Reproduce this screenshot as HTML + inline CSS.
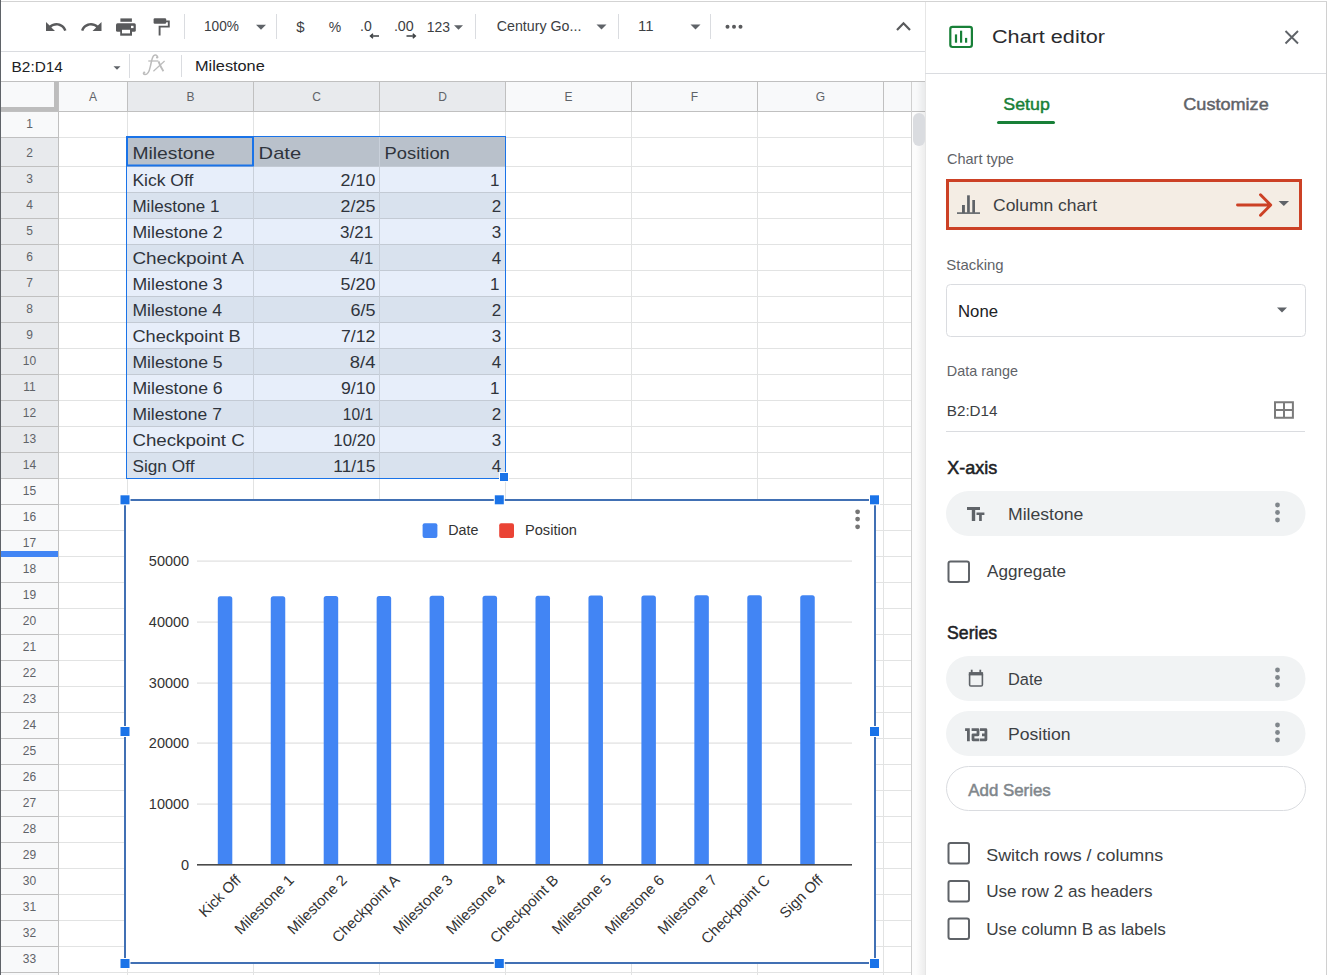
<!DOCTYPE html>
<html><head><meta charset="utf-8"><title>Chart editor</title>
<style>html,body{margin:0;padding:0;width:1327px;height:975px;overflow:hidden;background:#fff;font-family:"Liberation Sans",sans-serif} svg{display:block}</style>
</head><body><svg width="1327" height="975" viewBox="0 0 1327 975" font-family='"Liberation Sans", sans-serif'><rect x="0" y="0" width="1327" height="975" fill="#ffffff" />
<rect x="0" y="82" width="925" height="29" fill="#f8f9fa" />
<rect x="127" y="82" width="378" height="29" fill="#e8eaed" />
<rect x="0" y="111" width="58" height="864" fill="#f8f9fa" />
<rect x="0" y="137" width="58" height="341" fill="#e8eaed" />
<rect x="127" y="111" width="1" height="864" fill="#e2e3e3" />
<rect x="253" y="111" width="1" height="864" fill="#e2e3e3" />
<rect x="379" y="111" width="1" height="864" fill="#e2e3e3" />
<rect x="505" y="111" width="1" height="864" fill="#e2e3e3" />
<rect x="631" y="111" width="1" height="864" fill="#e2e3e3" />
<rect x="757" y="111" width="1" height="864" fill="#e2e3e3" />
<rect x="883" y="111" width="1" height="864" fill="#e2e3e3" />
<rect x="911" y="111" width="1" height="864" fill="#e2e3e3" />
<rect x="58" y="137" width="853" height="1" fill="#e2e3e3" />
<rect x="58" y="166" width="853" height="1" fill="#e2e3e3" />
<rect x="58" y="192" width="853" height="1" fill="#e2e3e3" />
<rect x="58" y="218" width="853" height="1" fill="#e2e3e3" />
<rect x="58" y="244" width="853" height="1" fill="#e2e3e3" />
<rect x="58" y="270" width="853" height="1" fill="#e2e3e3" />
<rect x="58" y="296" width="853" height="1" fill="#e2e3e3" />
<rect x="58" y="322" width="853" height="1" fill="#e2e3e3" />
<rect x="58" y="348" width="853" height="1" fill="#e2e3e3" />
<rect x="58" y="374" width="853" height="1" fill="#e2e3e3" />
<rect x="58" y="400" width="853" height="1" fill="#e2e3e3" />
<rect x="58" y="426" width="853" height="1" fill="#e2e3e3" />
<rect x="58" y="452" width="853" height="1" fill="#e2e3e3" />
<rect x="58" y="478" width="853" height="1" fill="#e2e3e3" />
<rect x="58" y="504" width="853" height="1" fill="#e2e3e3" />
<rect x="58" y="530" width="853" height="1" fill="#e2e3e3" />
<rect x="58" y="556" width="853" height="1" fill="#e2e3e3" />
<rect x="58" y="582" width="853" height="1" fill="#e2e3e3" />
<rect x="58" y="608" width="853" height="1" fill="#e2e3e3" />
<rect x="58" y="634" width="853" height="1" fill="#e2e3e3" />
<rect x="58" y="660" width="853" height="1" fill="#e2e3e3" />
<rect x="58" y="686" width="853" height="1" fill="#e2e3e3" />
<rect x="58" y="712" width="853" height="1" fill="#e2e3e3" />
<rect x="58" y="738" width="853" height="1" fill="#e2e3e3" />
<rect x="58" y="764" width="853" height="1" fill="#e2e3e3" />
<rect x="58" y="790" width="853" height="1" fill="#e2e3e3" />
<rect x="58" y="816" width="853" height="1" fill="#e2e3e3" />
<rect x="58" y="842" width="853" height="1" fill="#e2e3e3" />
<rect x="58" y="868" width="853" height="1" fill="#e2e3e3" />
<rect x="58" y="894" width="853" height="1" fill="#e2e3e3" />
<rect x="58" y="920" width="853" height="1" fill="#e2e3e3" />
<rect x="58" y="946" width="853" height="1" fill="#e2e3e3" />
<rect x="58" y="972" width="853" height="1" fill="#e2e3e3" />
<rect x="127" y="82" width="1" height="29" fill="#c0c0c0" />
<rect x="253" y="82" width="1" height="29" fill="#c0c0c0" />
<rect x="379" y="82" width="1" height="29" fill="#c0c0c0" />
<rect x="505" y="82" width="1" height="29" fill="#c0c0c0" />
<rect x="631" y="82" width="1" height="29" fill="#c0c0c0" />
<rect x="757" y="82" width="1" height="29" fill="#c0c0c0" />
<rect x="883" y="82" width="1" height="29" fill="#c0c0c0" />
<rect x="911" y="82" width="1" height="29" fill="#c0c0c0" />
<rect x="0" y="81" width="925" height="1" fill="#c0c0c0" />
<rect x="0" y="111" width="925" height="1" fill="#c0c0c0" />
<rect x="58" y="82" width="1" height="893" fill="#c0c0c0" />
<rect x="0" y="137" width="58" height="1" fill="#c0c0c0" />
<rect x="0" y="166" width="58" height="1" fill="#c0c0c0" />
<rect x="0" y="192" width="58" height="1" fill="#c0c0c0" />
<rect x="0" y="218" width="58" height="1" fill="#c0c0c0" />
<rect x="0" y="244" width="58" height="1" fill="#c0c0c0" />
<rect x="0" y="270" width="58" height="1" fill="#c0c0c0" />
<rect x="0" y="296" width="58" height="1" fill="#c0c0c0" />
<rect x="0" y="322" width="58" height="1" fill="#c0c0c0" />
<rect x="0" y="348" width="58" height="1" fill="#c0c0c0" />
<rect x="0" y="374" width="58" height="1" fill="#c0c0c0" />
<rect x="0" y="400" width="58" height="1" fill="#c0c0c0" />
<rect x="0" y="426" width="58" height="1" fill="#c0c0c0" />
<rect x="0" y="452" width="58" height="1" fill="#c0c0c0" />
<rect x="0" y="478" width="58" height="1" fill="#c0c0c0" />
<rect x="0" y="504" width="58" height="1" fill="#c0c0c0" />
<rect x="0" y="530" width="58" height="1" fill="#c0c0c0" />
<rect x="0" y="556" width="58" height="1" fill="#c0c0c0" />
<rect x="0" y="582" width="58" height="1" fill="#c0c0c0" />
<rect x="0" y="608" width="58" height="1" fill="#c0c0c0" />
<rect x="0" y="634" width="58" height="1" fill="#c0c0c0" />
<rect x="0" y="660" width="58" height="1" fill="#c0c0c0" />
<rect x="0" y="686" width="58" height="1" fill="#c0c0c0" />
<rect x="0" y="712" width="58" height="1" fill="#c0c0c0" />
<rect x="0" y="738" width="58" height="1" fill="#c0c0c0" />
<rect x="0" y="764" width="58" height="1" fill="#c0c0c0" />
<rect x="0" y="790" width="58" height="1" fill="#c0c0c0" />
<rect x="0" y="816" width="58" height="1" fill="#c0c0c0" />
<rect x="0" y="842" width="58" height="1" fill="#c0c0c0" />
<rect x="0" y="868" width="58" height="1" fill="#c0c0c0" />
<rect x="0" y="894" width="58" height="1" fill="#c0c0c0" />
<rect x="0" y="920" width="58" height="1" fill="#c0c0c0" />
<rect x="0" y="946" width="58" height="1" fill="#c0c0c0" />
<rect x="0" y="972" width="58" height="1" fill="#c0c0c0" />
<rect x="54" y="82" width="4" height="29" fill="#bdbdbd" />
<rect x="0" y="107" width="58" height="4" fill="#bdbdbd" />
<text x="93.0" y="101" font-size="12" fill="#5f6368" font-weight="normal" text-anchor="middle" >A</text>
<text x="190.5" y="101" font-size="12" fill="#5f6368" font-weight="normal" text-anchor="middle" >B</text>
<text x="316.5" y="101" font-size="12" fill="#5f6368" font-weight="normal" text-anchor="middle" >C</text>
<text x="442.5" y="101" font-size="12" fill="#5f6368" font-weight="normal" text-anchor="middle" >D</text>
<text x="568.5" y="101" font-size="12" fill="#5f6368" font-weight="normal" text-anchor="middle" >E</text>
<text x="694.5" y="101" font-size="12" fill="#5f6368" font-weight="normal" text-anchor="middle" >F</text>
<text x="820.5" y="101" font-size="12" fill="#5f6368" font-weight="normal" text-anchor="middle" >G</text>
<text x="29.5" y="128.2" font-size="12" fill="#5f6368" font-weight="normal" text-anchor="middle" >1</text>
<text x="29.5" y="157.2" font-size="12" fill="#5f6368" font-weight="normal" text-anchor="middle" >2</text>
<text x="29.5" y="183.2" font-size="12" fill="#5f6368" font-weight="normal" text-anchor="middle" >3</text>
<text x="29.5" y="209.2" font-size="12" fill="#5f6368" font-weight="normal" text-anchor="middle" >4</text>
<text x="29.5" y="235.2" font-size="12" fill="#5f6368" font-weight="normal" text-anchor="middle" >5</text>
<text x="29.5" y="261.2" font-size="12" fill="#5f6368" font-weight="normal" text-anchor="middle" >6</text>
<text x="29.5" y="287.2" font-size="12" fill="#5f6368" font-weight="normal" text-anchor="middle" >7</text>
<text x="29.5" y="313.2" font-size="12" fill="#5f6368" font-weight="normal" text-anchor="middle" >8</text>
<text x="29.5" y="339.2" font-size="12" fill="#5f6368" font-weight="normal" text-anchor="middle" >9</text>
<text x="29.5" y="365.2" font-size="12" fill="#5f6368" font-weight="normal" text-anchor="middle" >10</text>
<text x="29.5" y="391.2" font-size="12" fill="#5f6368" font-weight="normal" text-anchor="middle" >11</text>
<text x="29.5" y="417.2" font-size="12" fill="#5f6368" font-weight="normal" text-anchor="middle" >12</text>
<text x="29.5" y="443.2" font-size="12" fill="#5f6368" font-weight="normal" text-anchor="middle" >13</text>
<text x="29.5" y="469.2" font-size="12" fill="#5f6368" font-weight="normal" text-anchor="middle" >14</text>
<text x="29.5" y="495.2" font-size="12" fill="#5f6368" font-weight="normal" text-anchor="middle" >15</text>
<text x="29.5" y="521.2" font-size="12" fill="#5f6368" font-weight="normal" text-anchor="middle" >16</text>
<text x="29.5" y="547.2" font-size="12" fill="#5f6368" font-weight="normal" text-anchor="middle" >17</text>
<text x="29.5" y="573.2" font-size="12" fill="#5f6368" font-weight="normal" text-anchor="middle" >18</text>
<text x="29.5" y="599.2" font-size="12" fill="#5f6368" font-weight="normal" text-anchor="middle" >19</text>
<text x="29.5" y="625.2" font-size="12" fill="#5f6368" font-weight="normal" text-anchor="middle" >20</text>
<text x="29.5" y="651.2" font-size="12" fill="#5f6368" font-weight="normal" text-anchor="middle" >21</text>
<text x="29.5" y="677.2" font-size="12" fill="#5f6368" font-weight="normal" text-anchor="middle" >22</text>
<text x="29.5" y="703.2" font-size="12" fill="#5f6368" font-weight="normal" text-anchor="middle" >23</text>
<text x="29.5" y="729.2" font-size="12" fill="#5f6368" font-weight="normal" text-anchor="middle" >24</text>
<text x="29.5" y="755.2" font-size="12" fill="#5f6368" font-weight="normal" text-anchor="middle" >25</text>
<text x="29.5" y="781.2" font-size="12" fill="#5f6368" font-weight="normal" text-anchor="middle" >26</text>
<text x="29.5" y="807.2" font-size="12" fill="#5f6368" font-weight="normal" text-anchor="middle" >27</text>
<text x="29.5" y="833.2" font-size="12" fill="#5f6368" font-weight="normal" text-anchor="middle" >28</text>
<text x="29.5" y="859.2" font-size="12" fill="#5f6368" font-weight="normal" text-anchor="middle" >29</text>
<text x="29.5" y="885.2" font-size="12" fill="#5f6368" font-weight="normal" text-anchor="middle" >30</text>
<text x="29.5" y="911.2" font-size="12" fill="#5f6368" font-weight="normal" text-anchor="middle" >31</text>
<text x="29.5" y="937.2" font-size="12" fill="#5f6368" font-weight="normal" text-anchor="middle" >32</text>
<text x="29.5" y="963.2" font-size="12" fill="#5f6368" font-weight="normal" text-anchor="middle" >33</text>
<rect x="0" y="551" width="58" height="6" fill="#4285f4" />
<rect x="912" y="112" width="13" height="863" fill="#fcfcfc" />
<defs><linearGradient id="sh" x1="0" x2="1" y1="0" y2="0"><stop offset="0" stop-color="#000" stop-opacity="0"/><stop offset="1" stop-color="#000" stop-opacity="0.06"/></linearGradient></defs>
<rect x="916" y="82" width="9" height="893" fill="url(#sh)" />
<rect x="911" y="82" width="1" height="893" fill="#d0d0d0" />
<rect x="913" y="113" width="12" height="33" rx="6" fill="#dadce0"/>
<rect x="127" y="137" width="378" height="29" fill="#b9c1cb" />
<rect x="127" y="166" width="378" height="26" fill="#e7eefa" />
<rect x="127" y="192" width="378" height="26" fill="#d9e2ee" />
<rect x="127" y="218" width="378" height="26" fill="#e7eefa" />
<rect x="127" y="244" width="378" height="26" fill="#d9e2ee" />
<rect x="127" y="270" width="378" height="26" fill="#e7eefa" />
<rect x="127" y="296" width="378" height="26" fill="#d9e2ee" />
<rect x="127" y="322" width="378" height="26" fill="#e7eefa" />
<rect x="127" y="348" width="378" height="26" fill="#d9e2ee" />
<rect x="127" y="374" width="378" height="26" fill="#e7eefa" />
<rect x="127" y="400" width="378" height="26" fill="#d9e2ee" />
<rect x="127" y="426" width="378" height="26" fill="#e7eefa" />
<rect x="127" y="452" width="378" height="26" fill="#d9e2ee" />
<rect x="127" y="166" width="378" height="1" fill="#c3cad4" />
<rect x="127" y="192" width="378" height="1" fill="#c3cad4" />
<rect x="127" y="218" width="378" height="1" fill="#c3cad4" />
<rect x="127" y="244" width="378" height="1" fill="#c3cad4" />
<rect x="127" y="270" width="378" height="1" fill="#c3cad4" />
<rect x="127" y="296" width="378" height="1" fill="#c3cad4" />
<rect x="127" y="322" width="378" height="1" fill="#c3cad4" />
<rect x="127" y="348" width="378" height="1" fill="#c3cad4" />
<rect x="127" y="374" width="378" height="1" fill="#c3cad4" />
<rect x="127" y="400" width="378" height="1" fill="#c3cad4" />
<rect x="127" y="426" width="378" height="1" fill="#c3cad4" />
<rect x="127" y="452" width="378" height="1" fill="#c3cad4" />
<rect x="253" y="137" width="1" height="341" fill="#c9d0da" />
<rect x="379" y="137" width="1" height="341" fill="#c9d0da" />
<rect x="126" y="136" width="380" height="1" fill="#1a73e8" />
<rect x="126" y="478" width="380" height="1" fill="#1a73e8" />
<rect x="126" y="136" width="1" height="343" fill="#1a73e8" />
<rect x="505" y="136" width="1" height="343" fill="#1a73e8" />
<rect x="127" y="137" width="126" height="28.5" fill="none" stroke="#1a73e8" stroke-width="2"/>
<rect x="499" y="472" width="10" height="10" fill="#ffffff" />
<rect x="500" y="473" width="8" height="8" fill="#1a73e8" />
<text transform="translate(132.40 158.8) scale(1.1352 1)" font-size="17" fill="#2f343c" font-weight="normal" text-anchor="start" >Milestone</text>
<text transform="translate(258.60 158.8) scale(1.1862 1)" font-size="17" fill="#2f343c" font-weight="normal" text-anchor="start" >Date</text>
<text transform="translate(384.50 158.8) scale(1.0814 1)" font-size="17" fill="#2f343c" font-weight="normal" text-anchor="start" >Position</text>
<text transform="translate(132.40 186) scale(1.0313 1)" font-size="17" fill="#2f343c" font-weight="normal" text-anchor="start" >Kick Off</text>
<text transform="translate(375.38 186) scale(1.0511 1)" font-size="17" fill="#2f343c" font-weight="normal" text-anchor="end" >2/10</text>
<text transform="translate(499.52 186) scale(1.0000 1)" font-size="17" fill="#2f343c" font-weight="normal" text-anchor="end" >1</text>
<text transform="translate(132.40 212) scale(1.0028 1)" font-size="17" fill="#2f343c" font-weight="normal" text-anchor="start" >Milestone 1</text>
<text transform="translate(375.38 212) scale(1.0511 1)" font-size="17" fill="#2f343c" font-weight="normal" text-anchor="end" >2/25</text>
<text transform="translate(501.22 212) scale(1.0000 1)" font-size="17" fill="#2f343c" font-weight="normal" text-anchor="end" >2</text>
<text transform="translate(132.40 238) scale(1.0385 1)" font-size="17" fill="#2f343c" font-weight="normal" text-anchor="start" >Milestone 2</text>
<text transform="translate(373.18 238) scale(0.9998 1)" font-size="17" fill="#2f343c" font-weight="normal" text-anchor="end" >3/21</text>
<text transform="translate(501.22 238) scale(1.0000 1)" font-size="17" fill="#2f343c" font-weight="normal" text-anchor="end" >3</text>
<text transform="translate(132.40 264) scale(1.1121 1)" font-size="17" fill="#2f343c" font-weight="normal" text-anchor="start" >Checkpoint A</text>
<text transform="translate(373.20 264) scale(0.9818 1)" font-size="17" fill="#2f343c" font-weight="normal" text-anchor="end" >4/1</text>
<text transform="translate(501.22 264) scale(1.0000 1)" font-size="17" fill="#2f343c" font-weight="normal" text-anchor="end" >4</text>
<text transform="translate(132.40 290) scale(1.0385 1)" font-size="17" fill="#2f343c" font-weight="normal" text-anchor="start" >Milestone 3</text>
<text transform="translate(375.38 290) scale(1.0511 1)" font-size="17" fill="#2f343c" font-weight="normal" text-anchor="end" >5/20</text>
<text transform="translate(499.52 290) scale(1.0000 1)" font-size="17" fill="#2f343c" font-weight="normal" text-anchor="end" >1</text>
<text transform="translate(132.40 316) scale(1.0327 1)" font-size="17" fill="#2f343c" font-weight="normal" text-anchor="start" >Milestone 4</text>
<text transform="translate(375.40 316) scale(1.0580 1)" font-size="17" fill="#2f343c" font-weight="normal" text-anchor="end" >6/5</text>
<text transform="translate(501.22 316) scale(1.0000 1)" font-size="17" fill="#2f343c" font-weight="normal" text-anchor="end" >2</text>
<text transform="translate(132.40 342) scale(1.0711 1)" font-size="17" fill="#2f343c" font-weight="normal" text-anchor="start" >Checkpoint B</text>
<text transform="translate(375.38 342) scale(1.0421 1)" font-size="17" fill="#2f343c" font-weight="normal" text-anchor="end" >7/12</text>
<text transform="translate(501.22 342) scale(1.0000 1)" font-size="17" fill="#2f343c" font-weight="normal" text-anchor="end" >3</text>
<text transform="translate(132.40 368) scale(1.0385 1)" font-size="17" fill="#2f343c" font-weight="normal" text-anchor="start" >Milestone 5</text>
<text transform="translate(375.40 368) scale(1.0834 1)" font-size="17" fill="#2f343c" font-weight="normal" text-anchor="end" >8/4</text>
<text transform="translate(501.22 368) scale(1.0000 1)" font-size="17" fill="#2f343c" font-weight="normal" text-anchor="end" >4</text>
<text transform="translate(132.40 394) scale(1.0385 1)" font-size="17" fill="#2f343c" font-weight="normal" text-anchor="start" >Milestone 6</text>
<text transform="translate(375.38 394) scale(1.0421 1)" font-size="17" fill="#2f343c" font-weight="normal" text-anchor="end" >9/10</text>
<text transform="translate(499.52 394) scale(1.0000 1)" font-size="17" fill="#2f343c" font-weight="normal" text-anchor="end" >1</text>
<text transform="translate(132.40 420) scale(1.0293 1)" font-size="17" fill="#2f343c" font-weight="normal" text-anchor="start" >Milestone 7</text>
<text transform="translate(373.18 420) scale(0.9182 1)" font-size="17" fill="#2f343c" font-weight="normal" text-anchor="end" >10/1</text>
<text transform="translate(501.22 420) scale(1.0000 1)" font-size="17" fill="#2f343c" font-weight="normal" text-anchor="end" >2</text>
<text transform="translate(132.40 446) scale(1.1015 1)" font-size="17" fill="#2f343c" font-weight="normal" text-anchor="start" >Checkpoint C</text>
<text transform="translate(375.40 446) scale(0.9896 1)" font-size="17" fill="#2f343c" font-weight="normal" text-anchor="end" >10/20</text>
<text transform="translate(501.22 446) scale(1.0000 1)" font-size="17" fill="#2f343c" font-weight="normal" text-anchor="end" >3</text>
<text transform="translate(132.40 472) scale(1.0154 1)" font-size="17" fill="#2f343c" font-weight="normal" text-anchor="start" >Sign Off</text>
<text transform="translate(375.41 472) scale(1.0202 1)" font-size="17" fill="#2f343c" font-weight="normal" text-anchor="end" >11/15</text>
<text transform="translate(501.22 472) scale(1.0000 1)" font-size="17" fill="#2f343c" font-weight="normal" text-anchor="end" >4</text>
<rect x="125" y="500" width="750" height="463" fill="#ffffff" />
<rect x="197" y="560.5" width="655" height="1.2" fill="#e0e0e0" />
<rect x="197" y="621.5" width="655" height="1.2" fill="#e0e0e0" />
<rect x="197" y="682.5" width="655" height="1.2" fill="#e0e0e0" />
<rect x="197" y="742.5" width="655" height="1.2" fill="#e0e0e0" />
<rect x="197" y="803.5" width="655" height="1.2" fill="#e0e0e0" />
<text x="189.2" y="566" font-size="14.5" fill="#333333" font-weight="normal" text-anchor="end" >50000</text>
<text x="189.2" y="626.8" font-size="14.5" fill="#333333" font-weight="normal" text-anchor="end" >40000</text>
<text x="189.2" y="687.6" font-size="14.5" fill="#333333" font-weight="normal" text-anchor="end" >30000</text>
<text x="189.2" y="748.4" font-size="14.5" fill="#333333" font-weight="normal" text-anchor="end" >20000</text>
<text x="189.2" y="809.2" font-size="14.5" fill="#333333" font-weight="normal" text-anchor="end" >10000</text>
<text x="189.2" y="870" font-size="14.5" fill="#333333" font-weight="normal" text-anchor="end" >0</text>
<path d="M217.80,865 V598.70 Q217.80,596.20 220.30,596.20 H229.80 Q232.30,596.20 232.30,598.70 V865 Z" fill="#4285f4"/>
<path d="M270.75,865 V598.65 Q270.75,596.15 273.25,596.15 H282.75 Q285.25,596.15 285.25,598.65 V865 Z" fill="#4285f4"/>
<path d="M323.70,865 V598.56 Q323.70,596.06 326.20,596.06 H335.70 Q338.20,596.06 338.20,598.56 V865 Z" fill="#4285f4"/>
<path d="M376.65,865 V598.52 Q376.65,596.02 379.15,596.02 H388.65 Q391.15,596.02 391.15,598.52 V865 Z" fill="#4285f4"/>
<path d="M429.60,865 V598.34 Q429.60,595.84 432.10,595.84 H441.60 Q444.10,595.84 444.10,598.34 V865 Z" fill="#4285f4"/>
<path d="M482.55,865 V598.29 Q482.55,595.79 485.05,595.79 H494.55 Q497.05,595.79 497.05,598.29 V865 Z" fill="#4285f4"/>
<path d="M535.50,865 V598.15 Q535.50,595.65 538.00,595.65 H547.50 Q550.00,595.65 550.00,598.15 V865 Z" fill="#4285f4"/>
<path d="M588.45,865 V598.07 Q588.45,595.57 590.95,595.57 H600.45 Q602.95,595.57 602.95,598.07 V865 Z" fill="#4285f4"/>
<path d="M641.40,865 V597.94 Q641.40,595.44 643.90,595.44 H653.40 Q655.90,595.44 655.90,597.94 V865 Z" fill="#4285f4"/>
<path d="M694.35,865 V597.86 Q694.35,595.36 696.85,595.36 H706.35 Q708.85,595.36 708.85,597.86 V865 Z" fill="#4285f4"/>
<path d="M747.30,865 V597.79 Q747.30,595.29 749.80,595.29 H759.30 Q761.80,595.29 761.80,597.79 V865 Z" fill="#4285f4"/>
<path d="M800.25,865 V597.70 Q800.25,595.20 802.75,595.20 H812.25 Q814.75,595.20 814.75,597.70 V865 Z" fill="#4285f4"/>
<rect x="197" y="864" width="655" height="1.6" fill="#4a4a4a" />
<rect x="422.6" y="523.3" width="14.8" height="14.6" rx="2" fill="#4285f4"/>
<text transform="translate(448.20 534.6) scale(0.9859 1)" font-size="14.5" fill="#333333" font-weight="normal" text-anchor="start" >Date</text>
<rect x="499.2" y="523.3" width="14.8" height="14.6" rx="2" fill="#ea4335"/>
<text transform="translate(525.00 534.6) scale(1.0081 1)" font-size="14.5" fill="#333333" font-weight="normal" text-anchor="start" >Position</text>
<text x="242.00" y="881" font-size="15" fill="#333333" text-anchor="end" transform="rotate(-45 242.00 881)">Kick Off</text>
<text x="294.90" y="881" font-size="15" fill="#333333" text-anchor="end" transform="rotate(-45 294.90 881)">Milestone 1</text>
<text x="347.80" y="881" font-size="15" fill="#333333" text-anchor="end" transform="rotate(-45 347.80 881)">Milestone 2</text>
<text x="400.70" y="881" font-size="15" fill="#333333" text-anchor="end" transform="rotate(-45 400.70 881)">Checkpoint A</text>
<text x="453.60" y="881" font-size="15" fill="#333333" text-anchor="end" transform="rotate(-45 453.60 881)">Milestone 3</text>
<text x="506.50" y="881" font-size="15" fill="#333333" text-anchor="end" transform="rotate(-45 506.50 881)">Milestone 4</text>
<text x="559.40" y="881" font-size="15" fill="#333333" text-anchor="end" transform="rotate(-45 559.40 881)">Checkpoint B</text>
<text x="612.30" y="881" font-size="15" fill="#333333" text-anchor="end" transform="rotate(-45 612.30 881)">Milestone 5</text>
<text x="665.20" y="881" font-size="15" fill="#333333" text-anchor="end" transform="rotate(-45 665.20 881)">Milestone 6</text>
<text x="718.10" y="881" font-size="15" fill="#333333" text-anchor="end" transform="rotate(-45 718.10 881)">Milestone 7</text>
<text x="771.00" y="881" font-size="15" fill="#333333" text-anchor="end" transform="rotate(-45 771.00 881)">Checkpoint C</text>
<text x="823.90" y="881" font-size="15" fill="#333333" text-anchor="end" transform="rotate(-45 823.90 881)">Sign Off</text>
<circle cx="857.6" cy="511.8" r="2.4" fill="#757575"/>
<circle cx="857.6" cy="519.1" r="2.4" fill="#757575"/>
<circle cx="857.6" cy="526.8" r="2.4" fill="#757575"/>
<rect x="124" y="499" width="752" height="2" fill="#4170b4" />
<rect x="124" y="962" width="752" height="2" fill="#4170b4" />
<rect x="124" y="499" width="2" height="465" fill="#4170b4" />
<rect x="874" y="499" width="2" height="465" fill="#4170b4" />
<rect x="119.5" y="494.3" width="11" height="11" fill="#ffffff" />
<rect x="120.5" y="495.3" width="9" height="9" fill="#1a73e8" />
<rect x="119.5" y="958" width="11" height="11" fill="#ffffff" />
<rect x="120.5" y="959" width="9" height="9" fill="#1a73e8" />
<rect x="493.8" y="494.3" width="11" height="11" fill="#ffffff" />
<rect x="494.8" y="495.3" width="9" height="9" fill="#1a73e8" />
<rect x="493.8" y="958" width="11" height="11" fill="#ffffff" />
<rect x="494.8" y="959" width="9" height="9" fill="#1a73e8" />
<rect x="869" y="494.3" width="11" height="11" fill="#ffffff" />
<rect x="870" y="495.3" width="9" height="9" fill="#1a73e8" />
<rect x="869" y="958" width="11" height="11" fill="#ffffff" />
<rect x="870" y="959" width="9" height="9" fill="#1a73e8" />
<rect x="119.5" y="726" width="11" height="11" fill="#ffffff" />
<rect x="120.5" y="727" width="9" height="9" fill="#1a73e8" />
<rect x="869" y="726" width="11" height="11" fill="#ffffff" />
<rect x="870" y="727" width="9" height="9" fill="#1a73e8" />
<rect x="0" y="0" width="1327" height="81" fill="#ffffff" />
<rect x="0" y="1" width="1327" height="1" fill="#d3d3d3" />
<rect x="0" y="51" width="925" height="1" fill="#dadce0" />
<rect x="0" y="81" width="925" height="1" fill="#c0c0c0" />
<path transform="translate(44 15)" fill="#595a5c" d="M12.5 8c-2.65 0-5.05.99-6.9 2.6L2 7v9h9l-3.62-3.62c1.39-1.16 3.16-1.88 5.12-1.88 3.54 0 6.55 2.31 7.6 5.5l2.37-.78C21.08 11.03 17.15 8 12.5 8z"/>
<path transform="translate(79.5 15)" fill="#595a5c" d="M18.4 10.6C16.55 8.99 14.15 8 11.5 8c-4.65 0-8.58 3.03-9.96 7.22L3.9 16c1.05-3.19 4.05-5.5 7.6-5.5 1.95 0 3.73.72 5.12 1.88L13 16h9V7l-3.6 3.6z"/>
<rect x="120.4" y="18.4" width="11.5" height="3.4" fill="#595a5c"/>
<rect x="116" y="23.2" width="19.8" height="8.6" rx="1.5" fill="#595a5c"/>
<rect x="120.2" y="28.6" width="11.8" height="7.1" fill="#595a5c"/>
<rect x="122" y="29.8" width="8" height="3.6" fill="#ffffff"/>
<rect x="131" y="25.8" width="2.5" height="2.3" fill="#ffffff"/>
<rect x="153.6" y="18.2" width="12.6" height="5.6" rx="1.2" fill="#595a5c"/>
<path fill="none" stroke="#595a5c" stroke-width="1.9" d="M166 21.4 H168.8 V26.6 H159.6 V35.4"/>
<rect x="184.0" y="14" width="1" height="25" fill="#dadce0" />
<rect x="276.0" y="14" width="1" height="25" fill="#dadce0" />
<rect x="475.0" y="14" width="1" height="25" fill="#dadce0" />
<rect x="618.0" y="14" width="1" height="25" fill="#dadce0" />
<rect x="710.0" y="14" width="1" height="25" fill="#dadce0" />
<text transform="translate(204.00 31) scale(0.9775 1)" font-size="14" fill="#3c4043" font-weight="normal" text-anchor="start" >100%</text>
<path d="M256.0,24.7 L266.0,24.7 L261,29.7 Z" fill="#5f6368"/>
<text x="300.3" y="32" font-size="15" fill="#3c4043" font-weight="normal" text-anchor="middle" >$</text>
<text x="335" y="31.5" font-size="14" fill="#3c4043" font-weight="normal" text-anchor="middle" >%</text>
<text transform="translate(360.00 30.9) scale(1.0009 1)" font-size="14" fill="#3c4043" font-weight="normal" text-anchor="start" >.0</text>
<path d="M379 36 H371 M373 33.8 L370.5 36 L373 38.2" stroke="#3c4043" stroke-width="1.5" fill="none"/>
<text transform="translate(393.90 30.9) scale(1.0226 1)" font-size="14" fill="#3c4043" font-weight="normal" text-anchor="start" >.00</text>
<path d="M406.5 36 H415 M412.8 33.8 L415.3 36 L412.8 38.2" stroke="#3c4043" stroke-width="1.5" fill="none"/>
<text transform="translate(426.70 31.5) scale(0.9981 1)" font-size="14" fill="#3c4043" font-weight="normal" text-anchor="start" >123</text>
<path d="M454.0,25.2 L463.0,25.2 L458.5,29.8 Z" fill="#5f6368"/>
<text transform="translate(496.70 31.2) scale(1.0184 1)" font-size="14" fill="#3c4043" font-weight="normal" text-anchor="start" >Century Go...</text>
<path d="M596.5,24.5 L606.5,24.5 L601.5,29.5 Z" fill="#5f6368"/>
<text transform="translate(638.00 31.2) scale(1.0671 1)" font-size="14" fill="#3c4043" font-weight="normal" text-anchor="start" >11</text>
<path d="M690.5,24.5 L700.5,24.5 L695.5,29.5 Z" fill="#5f6368"/>
<circle cx="727.5" cy="26.8" r="2" fill="#595a5c"/>
<circle cx="734" cy="26.8" r="2" fill="#595a5c"/>
<circle cx="740.5" cy="26.8" r="2" fill="#595a5c"/>
<path d="M897 30 L903.5 23.3 L910 30" stroke="#595a5c" stroke-width="2.2" fill="none"/>
<text transform="translate(11.60 71.6) scale(1.0255 1)" font-size="15" fill="#202124" font-weight="normal" text-anchor="start" >B2:D14</text>
<path d="M113.5,66.25 L120.5,66.25 L117,69.75 Z" fill="#5f6368"/>
<rect x="129" y="54" width="1" height="24" fill="#dadce0" />
<path d="M157.8 57.6 C157.6 54.9 155.2 54.2 153.6 55.8 C152.1 57.3 151.6 60.8 150.3 66.6 C149.3 71.3 147.6 74.6 145.1 74.6 C143.7 74.6 143.2 73.8 143.6 72.9" stroke="#bcbcbc" stroke-width="1.5" fill="none"/>
<circle cx="157.1" cy="57.4" r="1.15" fill="#bcbcbc"/><circle cx="144.2" cy="72.6" r="1.15" fill="#bcbcbc"/>
<path d="M148.3 61 H158.4" stroke="#bcbcbc" stroke-width="1.3" fill="none"/>
<path d="M153.4 71.2 L164.6 61" stroke="#bcbcbc" stroke-width="1.2" fill="none"/>
<path d="M158.5 61.4 Q160.8 67.5 163.4 71.2" stroke="#bcbcbc" stroke-width="1.9" fill="none"/>
<rect x="181" y="55" width="1" height="22" fill="#dadce0" />
<text transform="translate(195.00 70.8) scale(1.0872 1)" font-size="15" fill="#202124" font-weight="normal" text-anchor="start" >Milestone</text>
<rect x="0" y="0" width="1" height="975" fill="#5f6368" />
<rect x="925" y="2" width="402" height="973" fill="#ffffff" />
<rect x="925" y="2" width="1" height="973" fill="#e6e6e6" />
<rect x="1326" y="2" width="1" height="973" fill="#d0d0d0" />
<rect x="925" y="73" width="401" height="1" fill="#dadce0" />
<rect x="950.3" y="26.8" width="21.6" height="20.2" rx="2.2" fill="none" stroke="#188038" stroke-width="2.2"/>
<rect x="954.9" y="34.4" width="2.2" height="8.3" fill="#188038" />
<rect x="960" y="30.7" width="2.2" height="12" fill="#188038" />
<rect x="965" y="37.9" width="2.2" height="4.8" fill="#188038" />
<text transform="translate(992.00 43) scale(1.1690 1)" font-size="18.5" fill="#2a2b2e" font-weight="normal" text-anchor="start" >Chart editor</text>
<path d="M1285.5 31 L1298 43.5 M1298 31 L1285.5 43.5" stroke="#5f6368" stroke-width="1.9"/>
<text transform="translate(1003.30 109.5) scale(1.0787 1)" font-size="16.5" fill="#188038" font-weight="normal" text-anchor="start" stroke="#188038" stroke-width="0.45">Setup</text>
<text transform="translate(1183.30 109.8) scale(1.0967 1)" font-size="16.5" fill="#5f6368" font-weight="normal" text-anchor="start" stroke="#5f6368" stroke-width="0.45">Customize</text>
<rect x="997" y="121" width="58" height="3" rx="1.5" fill="#188038"/>
<text transform="translate(947.00 164) scale(1.0376 1)" font-size="14" fill="#5f6368" font-weight="normal" text-anchor="start" >Chart type</text>
<rect x="947.5" y="180.5" width="353" height="48" fill="#f4ede4" stroke="#cc4125" stroke-width="3"/>
<rect x="957" y="212.3" width="23" height="1.6" fill="#5f6368" />
<rect x="962" y="205" width="2.9" height="8" fill="#5f6368" />
<rect x="967.1" y="195.3" width="2.7" height="17.5" fill="#5f6368" />
<rect x="972.3" y="200" width="2.7" height="12.8" fill="#5f6368" />
<text transform="translate(993.00 210.8) scale(1.0598 1)" font-size="16.5" fill="#3c4043" font-weight="normal" text-anchor="start" >Column chart</text>
<path d="M1237.5 205 H1270 M1260.5 194.8 L1270.7 205 L1260.5 215.2" stroke="#cc4125" stroke-width="2.9" stroke-linecap="round" stroke-linejoin="round" fill="none"/>
<path d="M1278.55,201.0 L1289.05,201.0 L1283.8,206.0 Z" fill="#5f6368"/>
<text transform="translate(946.30 270.3) scale(1.0672 1)" font-size="14" fill="#5f6368" font-weight="normal" text-anchor="start" >Stacking</text>
<rect x="946.5" y="284.5" width="359" height="52" rx="4" fill="#ffffff" stroke="#dadce0" stroke-width="1"/>
<text transform="translate(958.00 316.6) scale(0.9845 1)" font-size="17" fill="#202124" font-weight="normal" text-anchor="start" >None</text>
<path d="M1277.0,307.4 L1287.0,307.4 L1282,312.6 Z" fill="#5f6368"/>
<text transform="translate(946.80 375.6) scale(1.0279 1)" font-size="14" fill="#5f6368" font-weight="normal" text-anchor="start" >Data range</text>
<text transform="translate(946.80 415.7) scale(0.9808 1)" font-size="15.5" fill="#3c4043" font-weight="normal" text-anchor="start" >B2:D14</text>
<path d="M1275 402.2 H1292.9 V417.8 H1275 Z M1284 402.2 V417.8 M1275 410 H1292.9" stroke="#7b7b7b" stroke-width="2" fill="none"/>
<rect x="946" y="431" width="359" height="1" fill="#dadce0" />
<text transform="translate(947.20 473.8) scale(1.0287 1)" font-size="17.5" fill="#202124" font-weight="normal" text-anchor="start" stroke="#202124" stroke-width="0.5">X-axis</text>
<rect x="946" y="491" width="359.5" height="45" rx="22.5" fill="#f1f3f4"/>
<text transform="translate(1008.00 520) scale(1.0691 1)" font-size="16.5" fill="#3c4043" font-weight="normal" text-anchor="start" >Milestone</text>
<circle cx="1277.5" cy="505" r="2.4" fill="#80868b"/>
<circle cx="1277.5" cy="512.5" r="2.4" fill="#80868b"/>
<circle cx="1277.5" cy="520" r="2.4" fill="#80868b"/>
<path fill="#5f6368" d="M967 507 H980 V510 H975.2 V521 H971.8 V510 H967 Z M976.5 512.5 H984.4 V515 H981.8 V521 H979.1 V515 H976.5 Z"/>
<rect x="948.5" y="561.5" width="20.5" height="20.5" rx="2" fill="none" stroke="#5f6368" stroke-width="2"/>
<text transform="translate(987.00 577.2) scale(1.0375 1)" font-size="16.5" fill="#3c4043" font-weight="normal" text-anchor="start" >Aggregate</text>
<text transform="translate(947.10 638.6) scale(1.0078 1)" font-size="17.5" fill="#202124" font-weight="normal" text-anchor="start" stroke="#202124" stroke-width="0.5">Series</text>
<rect x="946" y="656" width="359.5" height="45" rx="22.5" fill="#f1f3f4"/>
<text transform="translate(1008.00 685) scale(0.9926 1)" font-size="16.5" fill="#3c4043" font-weight="normal" text-anchor="start" >Date</text>
<circle cx="1277.5" cy="670" r="2.4" fill="#80868b"/>
<circle cx="1277.5" cy="677.5" r="2.4" fill="#80868b"/>
<circle cx="1277.5" cy="685" r="2.4" fill="#80868b"/>
<rect x="969.6" y="673" width="12.8" height="13" rx="1.3" fill="none" stroke="#5f6368" stroke-width="1.6"/>
<rect x="968.8" y="672.2" width="14.3" height="3.2" fill="#5f6368" />
<rect x="970.8" y="669.7" width="1.8" height="3" fill="#5f6368" />
<rect x="979.4" y="669.7" width="1.8" height="3" fill="#5f6368" />
<rect x="946" y="711" width="359.5" height="45" rx="22.5" fill="#f1f3f4"/>
<text transform="translate(1008.00 740) scale(1.0665 1)" font-size="16.5" fill="#3c4043" font-weight="normal" text-anchor="start" >Position</text>
<circle cx="1277.5" cy="725" r="2.4" fill="#80868b"/>
<circle cx="1277.5" cy="732.5" r="2.4" fill="#80868b"/>
<circle cx="1277.5" cy="740" r="2.4" fill="#80868b"/>
<path fill="#5f6368" d="M965.1 728.3 H969.8 V741.2 H967 V731 H965.1 Z"/>
<path fill="none" stroke="#5f6368" stroke-width="2.8" stroke-linejoin="round" d="M971.6 729.7 H978 V734.8 H973 V739.8 H979.4"/>
<path fill="none" stroke="#5f6368" stroke-width="2.8" stroke-linejoin="round" d="M980 729.7 H985.9 V739.8 H980 M982 734.8 H985.9"/>
<rect x="946.5" y="766.5" width="359" height="44" rx="22" fill="#ffffff" stroke="#dadce0" stroke-width="1"/>
<text transform="translate(968.30 795.6) scale(1.0220 1)" font-size="16.5" fill="#80868b" font-weight="normal" text-anchor="start" stroke="#80868b" stroke-width="0.5">Add Series</text>
<rect x="948.5" y="843" width="20.5" height="20.5" rx="2" fill="none" stroke="#5f6368" stroke-width="2"/>
<text transform="translate(986.20 860.7) scale(1.0844 1)" font-size="16.5" fill="#3c4043" font-weight="normal" text-anchor="start" >Switch rows / columns</text>
<rect x="948.5" y="881" width="20.5" height="20.5" rx="2" fill="none" stroke="#5f6368" stroke-width="2"/>
<text transform="translate(986.20 897.4) scale(1.0380 1)" font-size="16.5" fill="#3c4043" font-weight="normal" text-anchor="start" >Use row 2 as headers</text>
<rect x="948.5" y="918.5" width="20.5" height="20.5" rx="2" fill="none" stroke="#5f6368" stroke-width="2"/>
<text transform="translate(986.20 935) scale(1.0428 1)" font-size="16.5" fill="#3c4043" font-weight="normal" text-anchor="start" >Use column B as labels</text></svg></body></html>
